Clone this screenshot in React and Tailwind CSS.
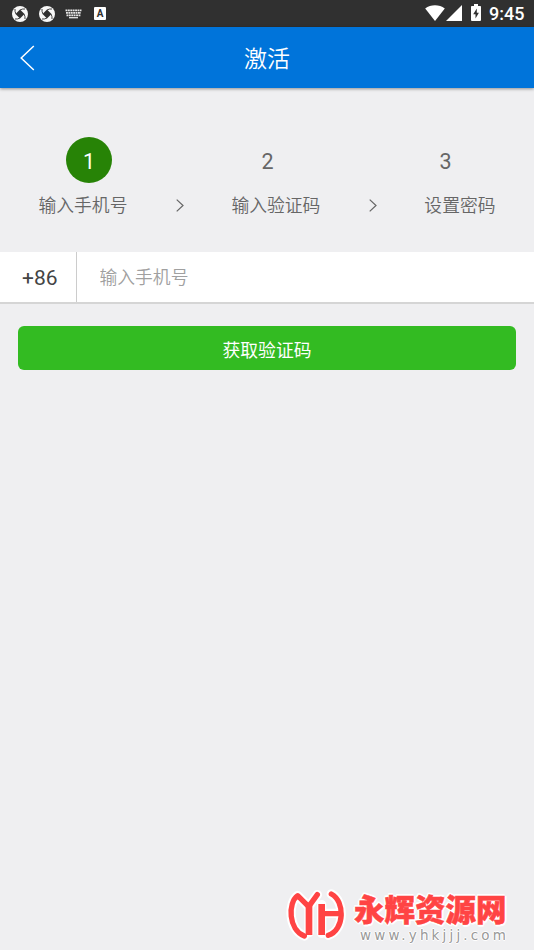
import React from 'react'

const steps = [
  { id: 1, label: '输入手机号' },
  { id: 2, label: '输入验证码' },
  { id: 3, label: '设置密码' },
];

// four curved blades around a dark square
const ApertureIcon = () => (
  <svg className="w-4 h-4" viewBox="0 0 16 16">
    <circle cx="8" cy="8" r="8" fill="#f8f8f8" />
    <path d="M8 3.500 12.500 8 8 12.500 3.500 8z" fill="#303030" />
    <path
      d="M8 4Q10.500 2.600 13 3M12 8Q13.400 10.500 13 13M8 12Q5.500 13.400 3 13M4 8Q2.600 5.500 3 3"
      fill="none"
      stroke="#303030"
      strokeWidth="0.900"
    />
  </svg>
);

const KeyboardIcon = () => (
  <svg className="w-[17px] h-[10px]" viewBox="0 0 17 10" stroke="#e8e8e8" strokeWidth="1.8">
    <path d="M0.500 1.300h16M1 3.900h15M1.500 6.400h14" strokeDasharray="1.900 0.500" />
    <path d="M4 8.700h9" strokeWidth="1.300" />
  </svg>
);

const LetterIcon = () => (
  <div className="w-3 h-[13px] rounded-[1px] bg-white text-[#303030] text-[10px] leading-[13px] text-center font-bold">
    A
  </div>
);

const StatusBar = () => (
  <div className="h-[27px] bg-[#303030] flex items-center justify-between pl-3 pr-[10px]">
    <div className="flex items-center">
      <ApertureIcon />
      <div className="ml-[11px]"><ApertureIcon /></div>
      <div className="ml-[10px]"><KeyboardIcon /></div>
      <div className="ml-[12px]"><LetterIcon /></div>
    </div>
    <div className="flex items-center">
      <svg className="w-[20px] h-4 -mt-px" viewBox="0 0 20 16" fill="#fff">
        <path d="M10 16 0.200 3.600C3 1.300 6.400 0.300 10 0.300s7 1 9.800 3.300z" />
      </svg>
      <svg className="w-4 h-4 ml-px -mt-px" viewBox="0 0 16 16" fill="#fff">
        <path d="M16 0v16H0z" />
      </svg>
      <svg className="w-[10px] h-[17px] ml-[9px] -mt-[2px]" viewBox="0 0 10 17">
        <path d="M3 0h4v2h2.200q0.800 0 0.800 0.800V16q0 1-1 1H1q-1 0-1-1V2.800Q0 2 0.800 2H3z" fill="#fff" />
        <path d="M5.800 4.500 2.200 10.200H4.500V14.500L7.900 8.700H5.800z" fill="#303030" />
      </svg>
      <span className="ml-[8px] w-[35px] text-[18px] leading-[27px] font-medium text-white whitespace-nowrap">9:45</span>
    </div>
  </div>
);

const Header = () => (
  <div className="h-[61px] bg-[#0074da] shadow-[0_1px_3px_rgba(0,0,0,0.4)] grid grid-cols-3 items-center text-white">
    <svg className="ml-5 w-[15px] h-[26px]" viewBox="0 0 15 26" fill="none" stroke="#fff" strokeWidth="1.5">
      <path d="M13.800 1 1.200 13l12.600 12" />
    </svg>
    <h1 className="pt-[5px] text-[23px] text-center font-[350]">激活</h1>
  </div>
);

const Chevron = () => (
  <svg className="w-2 h-[13px] mb-[2px] translate-x-px" viewBox="0 0 8 13" fill="none" stroke="#666" strokeWidth="1.2">
    <path d="m0.700 0.600 6.300 5.900-6.300 5.900" />
  </svg>
);

const Steps = () => (
  <div className="pt-[49px]">
    <div className="grid grid-cols-3">
      {steps.map((step) => (
        <div key={step.id} className="flex justify-center">
          <div
            className={
              step.id === 1
                ? 'w-[46px] h-[46px] rounded-full bg-[#278306] text-white text-[21.500px] leading-[49px] text-center'
                : 'w-[46px] h-[46px] pl-px text-[#666] text-[21.500px] leading-[49px] text-center'
            }
          >
            {step.id}
          </div>
        </div>
      ))}
    </div>
    <div className="flex items-center justify-between px-[38.500px] mt-[9px] h-7 text-[17.800px] text-[#666] font-[350]">
      {steps.map((step, i) => (
        <React.Fragment key={step.id}>
          {i > 0 && <Chevron />}
          <span>{step.label}</span>
        </React.Fragment>
      ))}
    </div>
  </div>
);

const Watermark = () => (
  <div className="flex items-start">
    <svg className="w-[60px] h-[54px] shrink-0" viewBox="17 24 180 162" fill="none" strokeLinecap="round" strokeLinejoin="round">
      <g stroke="#fff" strokeWidth="28">
        <path d="M72 168C24 150 22 68 52 47L85 80 111 44M86 76v82M124 74v86M125 100h57M153 42c42 22 40 108-9 124" />
      </g>
      <g stroke="#f44" strokeWidth="16">
        <path d="M72 168C24 150 22 68 52 47L85 80 111 44M153 42c42 22 40 108-9 124" />
        <path d="M86 76v89M124 72v93" strokeWidth="20" strokeLinecap="butt" />
        <path d="M124 101h57" />
      </g>
    </svg>
    <div className="ml-2 pt-[6px] whitespace-nowrap">
      <div className="text-[30.500px] leading-[34px] font-black text-[#f44] [-webkit-text-stroke:0.500px_#f44] [text-shadow:2px_0_#fff,-2px_0_#fff,0_2px_#fff,0_-2px_#fff,1px_2px_#fff,-1px_-2px_#fff]">
        永辉资源网
      </div>
      <div className="ml-[6px] font-['DejaVu_Sans'] text-[13.500px] leading-[15px] tracking-[3.150px] text-[#999] [text-shadow:1px_0_#fff,-1px_0_#fff,0_1px_#fff,0_-1px_#fff]">
        www.yhkjjj.com
      </div>
    </div>
  </div>
);

const App = () => {
  return (
    <div className="w-[534px] h-[950px] overflow-hidden bg-[#efeff1] flex flex-col font-[Roboto,'Noto_Sans_CJK_SC',sans-serif]">
      <StatusBar />
      <Header />
      <Steps />
      <div className="mt-[32px] h-[52px] shrink-0 bg-white border-b-2 border-[#d5d5d5] flex items-center">
        <div className="w-[77px] h-full pl-[22px] pt-[3px] border-r border-[#ccc] flex items-center text-[21px] text-[#444]">
          +86
        </div>
        <input
          className="flex-1 h-full pl-[22.500px] text-[17.800px] font-[350] outline-none placeholder:text-[#a0a0a0]"
          placeholder="输入手机号"
        />
      </div>
      <button className="mt-[22px] mx-[18px] h-[44px] pt-[6px] shrink-0 rounded-md bg-[#33bb22] text-white text-[17.800px]">
        获取验证码
      </button>
      <div className="mt-auto ml-[286px] h-[62px]">
        <Watermark />
      </div>
    </div>
  );
};

export default App;
